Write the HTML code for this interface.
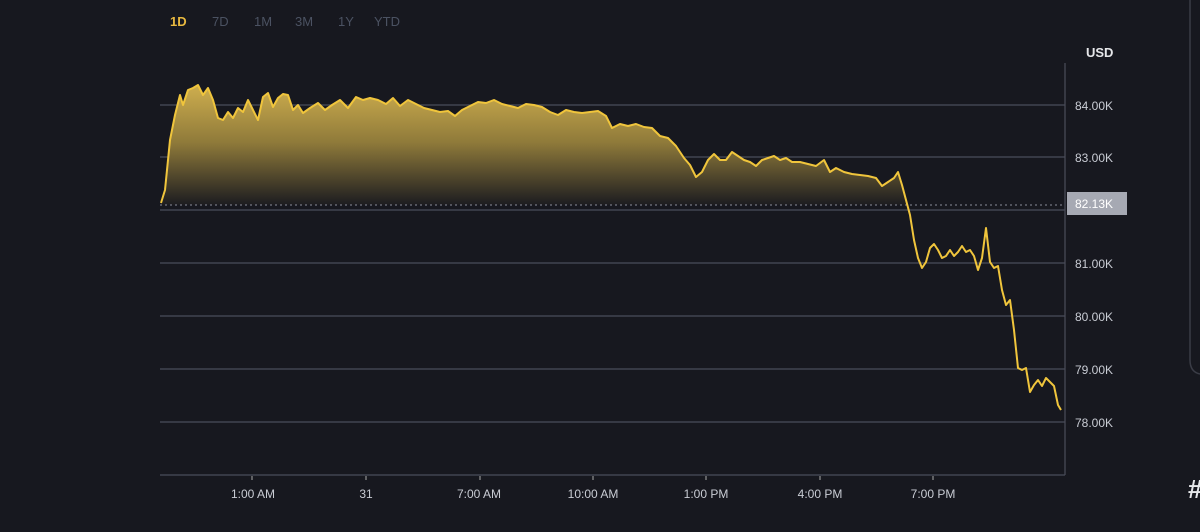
<!DOCTYPE html>
<html><head><meta charset="utf-8"><style>
html,body{margin:0;padding:0;background:#17181f;width:1200px;height:532px;overflow:hidden;font-family:"Liberation Sans",sans-serif}
.tabs{position:absolute;top:14px;left:170px;font-size:13px;color:#4b5262}
.tabs span{position:absolute;white-space:nowrap}
</style></head><body>
<div class="tabs">
<span style="left:0;color:#e9b93f;font-weight:bold">1D</span>
<span style="left:42px">7D</span>
<span style="left:84px">1M</span>
<span style="left:125px">3M</span>
<span style="left:168px">1Y</span>
<span style="left:204px">YTD</span>
</div>
<svg width="1200" height="532" style="position:absolute;left:0;top:0">
<defs><linearGradient id="g" x1="0" y1="80" x2="0" y2="205" gradientUnits="userSpaceOnUse">
<stop offset="0" stop-color="#d4b350"/><stop offset="0.5" stop-color="#8f7a3a"/><stop offset="1" stop-color="#1c1c20"/></linearGradient></defs>
<g stroke="#4a4d5a" stroke-width="1.2">
<line x1="160" y1="105" x2="1065" y2="105"/><line x1="160" y1="157" x2="1065" y2="157"/>
<line x1="160" y1="210" x2="1065" y2="210"/><line x1="160" y1="263" x2="1065" y2="263"/>
<line x1="160" y1="316" x2="1065" y2="316"/><line x1="160" y1="369" x2="1065" y2="369"/>
<line x1="160" y1="422" x2="1065" y2="422"/><line x1="160" y1="475" x2="1065" y2="475"/>
<line x1="1065" y1="63" x2="1065" y2="475"/>
</g>
<g stroke="#aaa" stroke-width="1"><line x1="252" y1="476" x2="252" y2="480"/><line x1="366" y1="476" x2="366" y2="480"/><line x1="480" y1="476" x2="480" y2="480"/><line x1="593" y1="476" x2="593" y2="480"/><line x1="706" y1="476" x2="706" y2="480"/><line x1="820" y1="476" x2="820" y2="480"/><line x1="933" y1="476" x2="933" y2="480"/></g>
<polygon fill="url(#g)" points="161,205 161,203 165,190 170,140 175,115 180,95 183,105 188,90 193,88 198,85 203,95 208,88 213,100 218,118 223,120 228,112 233,118 238,108 243,112 248,100 253,110 258,120 263,97 268,93 273,107 278,98 283,94 288,95 293,110 298,105 303,113 310,108 318,103 325,110 332,105 340,100 348,108 356,97 363,100 370,98 378,100 386,104 393,98 400,106 408,100 416,104 424,108 432,110 440,112 448,111 455,116 462,110 470,106 478,102 486,103 494,100 502,104 510,106 518,108 526,104 534,105 542,107 550,112 558,115 566,110 574,112 582,113 590,112 598,111 606,116 612,128 620,124 628,126 636,124 644,127 652,128 660,136 668,138 676,146 684,158 690,165 696,177 702,172 708,160 714,154 720,160 726,160 732,152 738,156 744,160 750,162 756,166 762,160 768,158 774,156 780,160 786,158 792,162 800,162 808,164 816,166 824,160 830,172 836,168 844,172 852,174 860,175 868,176 876,178 882,186 888,182 894,178 898,172 902,185 906,200 907,205"/>
<line x1="160" y1="205" x2="1065" y2="205" stroke="#8a8d99" stroke-width="1" stroke-dasharray="2,3"/>
<polyline fill="none" stroke="#f0c53c" stroke-width="2" stroke-linejoin="round" points="161,203 165,190 170,140 175,115 180,95 183,105 188,90 193,88 198,85 203,95 208,88 213,100 218,118 223,120 228,112 233,118 238,108 243,112 248,100 253,110 258,120 263,97 268,93 273,107 278,98 283,94 288,95 293,110 298,105 303,113 310,108 318,103 325,110 332,105 340,100 348,108 356,97 363,100 370,98 378,100 386,104 393,98 400,106 408,100 416,104 424,108 432,110 440,112 448,111 455,116 462,110 470,106 478,102 486,103 494,100 502,104 510,106 518,108 526,104 534,105 542,107 550,112 558,115 566,110 574,112 582,113 590,112 598,111 606,116 612,128 620,124 628,126 636,124 644,127 652,128 660,136 668,138 676,146 684,158 690,165 696,177 702,172 708,160 714,154 720,160 726,160 732,152 738,156 744,160 750,162 756,166 762,160 768,158 774,156 780,160 786,158 792,162 800,162 808,164 816,166 824,160 830,172 836,168 844,172 852,174 860,175 868,176 876,178 882,186 888,182 894,178 898,172 902,185 906,200 910,215 914,240 918,258 922,268 926,262 930,248 934,244 938,250 942,258 946,256 950,250 954,256 958,252 962,246 966,252 970,250 974,256 978,270 982,258 986,228 990,262 994,268 998,266 1002,290 1006,305 1010,300 1014,330 1018,368 1022,370 1026,368 1030,392 1034,385 1038,380 1042,386 1046,378 1050,382 1054,386 1058,405 1061,410"/>
<rect x="1067" y="192" width="60" height="23" fill="#a6a9b3"/>
<g font-family="Liberation Sans,sans-serif" font-size="12" fill="#c9ccd4">
<text x="1086" y="57" font-weight="bold" font-size="13" fill="#e6e7ea">USD</text>
<text x="1075" y="110">84.00K</text><text x="1075" y="162">83.00K</text>
<text x="1075" y="208" fill="#fff">82.13K</text>
<text x="1075" y="268">81.00K</text><text x="1075" y="321">80.00K</text>
<text x="1075" y="374">79.00K</text><text x="1075" y="427">78.00K</text>
</g>
<g font-family="Liberation Sans,sans-serif" font-size="12" fill="#c9ccd4" text-anchor="middle">
<text x="253" y="498">1:00 AM</text><text x="366" y="498">31</text><text x="479" y="498">7:00 AM</text>
<text x="593" y="498">10:00 AM</text><text x="706" y="498">1:00 PM</text><text x="820" y="498">4:00 PM</text><text x="933" y="498">7:00 PM</text>
</g>
<path d="M1190 0 V360 Q1190 372 1200 374" fill="none" stroke="#3a3c46" stroke-width="1.5"/>
<text x="1188" y="498" font-family="Liberation Sans,sans-serif" font-size="26" font-weight="bold" fill="#e6e7ea">#</text>
</svg>
</body></html>
